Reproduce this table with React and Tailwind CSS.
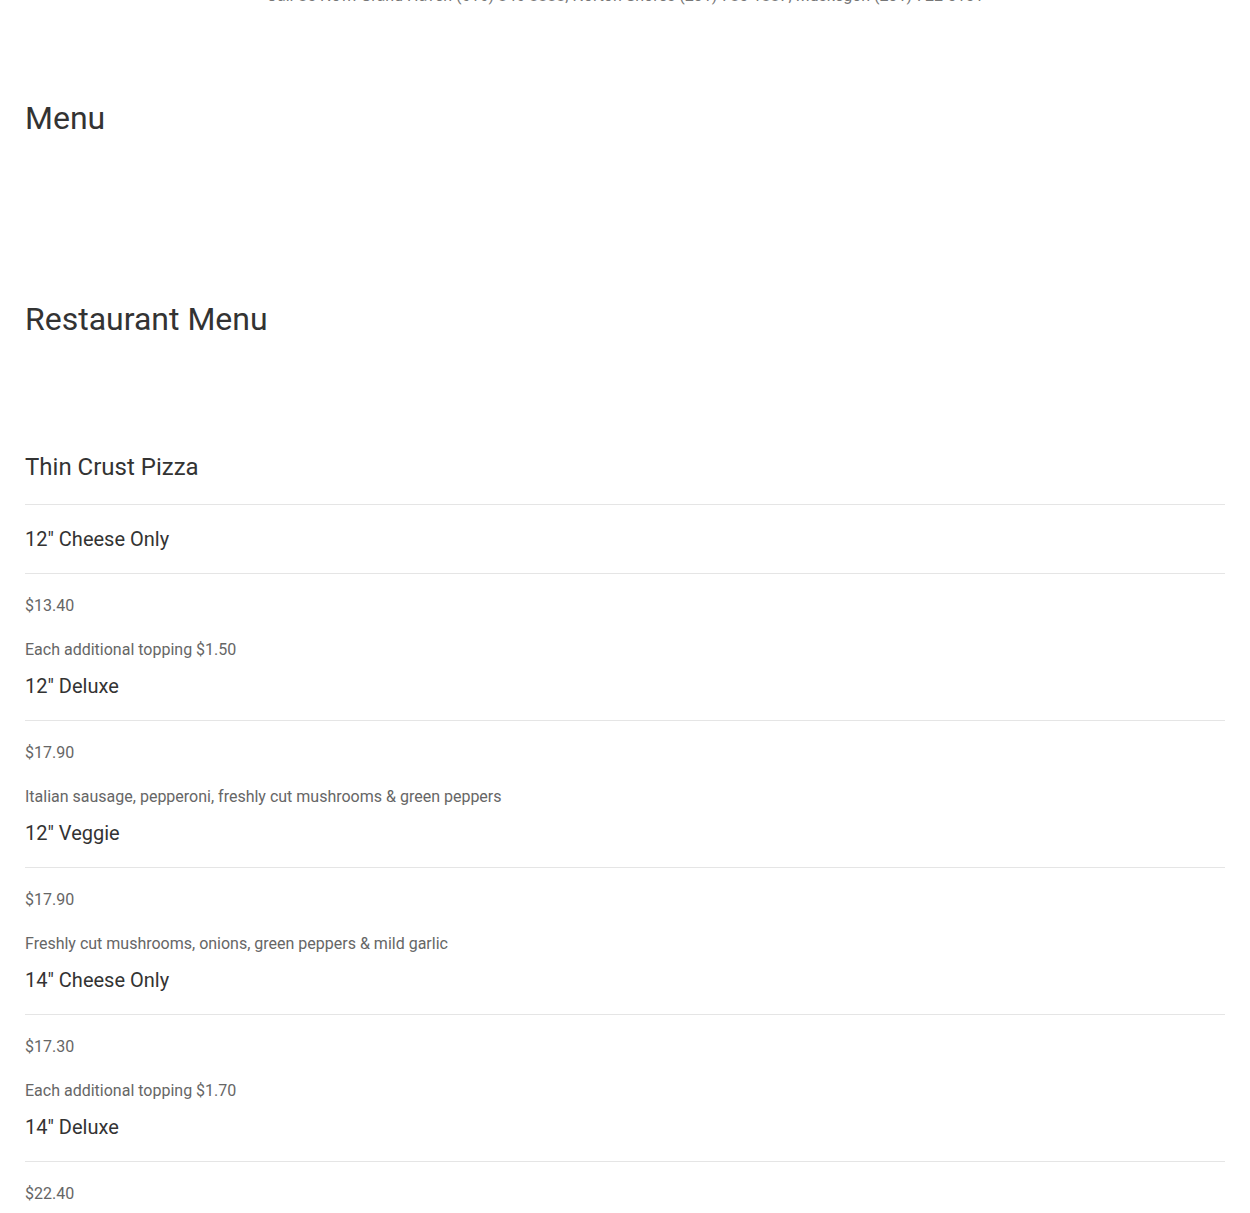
export default function App() {
  const items = [
    { name: '12" Cheese Only', price: "$13.40", desc: "Each additional topping $1.50" },
    { name: '12" Deluxe', price: "$17.90", desc: "Italian sausage, pepperoni, freshly cut mushrooms & green peppers" },
    { name: '12" Veggie', price: "$17.90", desc: "Freshly cut mushrooms, onions, green peppers & mild garlic" },
    { name: '14" Cheese Only', price: "$17.30", desc: "Each additional topping $1.70" },
    { name: '14" Deluxe', price: "$22.40", desc: "Italian sausage, pepperoni, freshly cut mushrooms & green peppers" },
  ];
  return (
    <div className="bg-white min-h-screen overflow-hidden" style={{ fontFamily: "Roboto, 'Liberation Sans', sans-serif" }}>
      <div className="mt-[-16px] text-center text-[16px] leading-[24px] text-[#777]">
        Call Us Now: Grand Haven (616) 846-8888, Norton Shores (231) 780-1887, Muskegon (231) 722-0101
      </div>
      <div className="px-[25px]">
        <h1 className="mt-[91px] text-[32px] leading-[38px] text-[#333]">Menu</h1>
        <h2 className="mt-[163px] text-[32px] leading-[38px] text-[#333]">Restaurant Menu</h2>
        <h3 className="mt-[115px] text-[24px] leading-[29px] text-[#333] pb-[22px] border-b border-[#e5e5e5]">Thin Crust Pizza</h3>
        {items.map((it, i) => (
          <div key={i}>
            <h4 className={`${i === 0 ? "mt-[22px]" : "mt-[12px]"} text-[20px] leading-[24px] text-[#333] pb-[22px] border-b border-[#e5e5e5]`}>{it.name}</h4>
            <p className="mt-[20px] text-[16px] leading-[24px] text-[#666]">{it.price}</p>
            <p className="mt-[20px] text-[16px] leading-[24px] text-[#666]">{it.desc}</p>
          </div>
        ))}
      </div>
    </div>
  );
}
